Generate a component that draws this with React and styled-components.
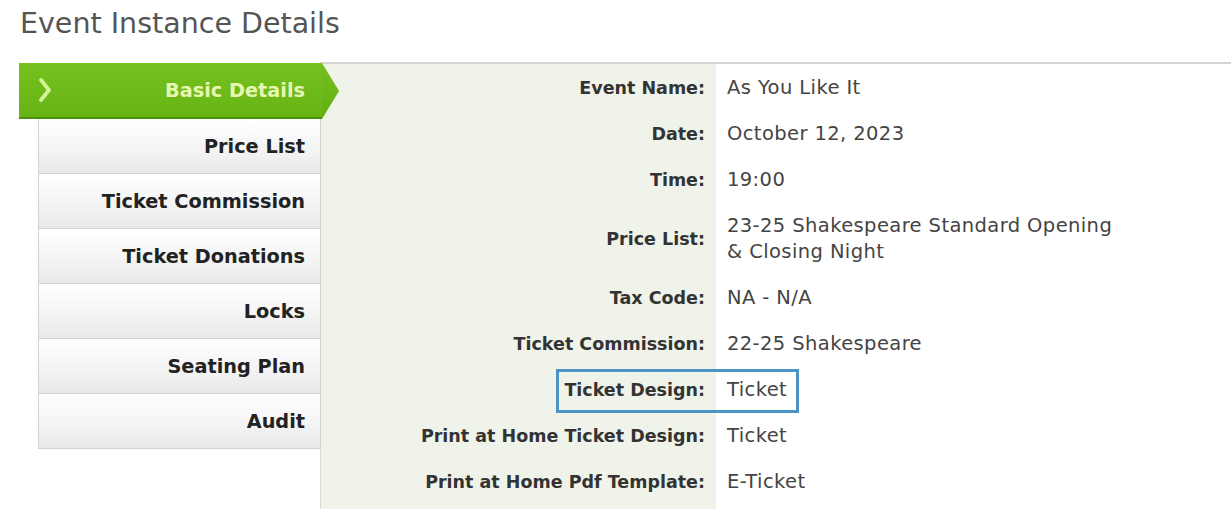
import React from 'react';
import styled, { createGlobalStyle } from 'styled-components';

const GlobalStyle = createGlobalStyle`
  html, body {
    margin: 0;
    padding: 0;
    background: #ffffff;
  }
  body {
    font-family: 'DejaVu Sans', Verdana, sans-serif;
    overflow: hidden;
  }
`;

const Page = styled.div`
  width: 1231px;
  height: 509px;
  overflow: hidden;
`;

const Title = styled.h1`
  margin: 0;
  padding: 7px 0 0 20px;
  height: 56px;
  box-sizing: border-box;
  font-family: 'DejaVu Sans', Verdana, sans-serif;
  font-weight: normal;
  font-size: 28.5px;
  line-height: 34px;
  color: #555555;
`;

const Layout = styled.div`
  display: flex;
  align-items: stretch;
  height: 446px;
  padding-top: 7px;
`;

const Sidebar = styled.div`
  width: 302px;
  margin-left: 19px;
  display: flex;
  flex-direction: column;
  position: relative;
  z-index: 2;
`;

const Tab = styled.div`
  height: 55px;
  box-sizing: border-box;
  margin-left: 19px;
  display: flex;
  align-items: center;
  justify-content: flex-end;
  padding-right: 15px;
  border: 1px solid #d2d2d2;
  border-top: none;
  background: linear-gradient(to bottom, #ffffff 0%, #f4f4f4 55%, #e9e9e9 100%);
  font-weight: bold;
  font-size: 19.3px;
  color: #222222;
`;

const ActiveTab = styled.div`
  position: relative;
  height: 56px;
  width: 303px;
  box-sizing: border-box;
  display: flex;
  align-items: center;
  justify-content: space-between;
  padding: 0 17px 0 18px;
  background: linear-gradient(to bottom, #76c120 0%, #66b414 100%);
  border-bottom: 2px solid #4f8f10;
  font-weight: bold;
  font-size: 19.3px;
  color: #e7f7b2;

  &::after {
    content: '';
    position: absolute;
    right: -17px;
    top: 0;
    width: 17px;
    height: 56px;
    background: linear-gradient(to bottom, #76c120 0%, #62ad12 100%);
    clip-path: polygon(0 0, 100% 50%, 0 100%);
  }
`;

const Chevron = styled.svg`
  width: 16px;
  height: 28px;
  margin-top: -1px;
  flex: none;
`;

const Panel = styled.div`
  flex: 1;
  margin-top: -1px;
  margin-left: -1px;
  border-top: 2px solid #d3d3d3;
  border-left: 1px solid #d8d8d8;
  background: linear-gradient(to right, #f0f3ea 0, #f0f3ea 395px, #ffffff 395px);
`;

const Row = styled.div`
  position: relative;
  display: grid;
  grid-template-columns: 395px 1fr;
`;

const Label = styled.div`
  padding: 11px 11px 9px 0;
  text-align: right;
  font-weight: bold;
  font-size: 17.5px;
  line-height: 26px;
  color: #333333;
  align-self: center;
`;

const Value = styled.div`
  padding: 11px 0 9px 11px;
  font-size: 19.5px;
  letter-spacing: 0.4px;
  line-height: 26px;
  color: #444444;
  align-self: center;
`;

const Highlight = styled.div`
  position: absolute;
  left: 235px;
  width: 243px;
  top: 3px;
  height: 44px;
  box-sizing: border-box;
  border: 3px solid #4d93c4;
  pointer-events: none;
`;

const tabs = ['Price List', 'Ticket Commission', 'Ticket Donations', 'Locks', 'Seating Plan', 'Audit'];

const details = [
  { label: 'Event Name:', value: 'As You Like It' },
  { label: 'Date:', value: 'October 12, 2023' },
  { label: 'Time:', value: '19:00' },
  { label: 'Price List:', value: ['23-25 Shakespeare Standard Opening', '& Closing Night'] },
  { label: 'Tax Code:', value: 'NA - N/A' },
  { label: 'Ticket Commission:', value: '22-25 Shakespeare' },
  { label: 'Ticket Design:', value: 'Ticket', highlight: true },
  { label: 'Print at Home Ticket Design:', value: 'Ticket' },
  { label: 'Print at Home Pdf Template:', value: 'E-Ticket' },
];

const App = () => {
  return (
    <Page>
      <GlobalStyle />
      <Title>Event Instance Details</Title>
      <Layout>
        <Sidebar>
          <ActiveTab>
            <Chevron viewBox="0 0 16 28">
              <polyline
                points="4,4 12,14 4,24"
                fill="none"
                stroke="#d3f39a"
                strokeWidth="3.8"
                strokeLinecap="round"
                strokeLinejoin="round"
              />
            </Chevron>
            <span>Basic Details</span>
          </ActiveTab>
          {tabs.map((t) => (
            <Tab key={t}>{t}</Tab>
          ))}
        </Sidebar>
        <Panel>
          {details.map((d) => (
            <Row key={d.label}>
              <Label>{d.label}</Label>
              <Value>
                {Array.isArray(d.value)
                  ? d.value.map((line) => <div key={line}>{line}</div>)
                  : d.value}
              </Value>
              {d.highlight && <Highlight />}
            </Row>
          ))}
        </Panel>
      </Layout>
    </Page>
  );
};

export default App;
